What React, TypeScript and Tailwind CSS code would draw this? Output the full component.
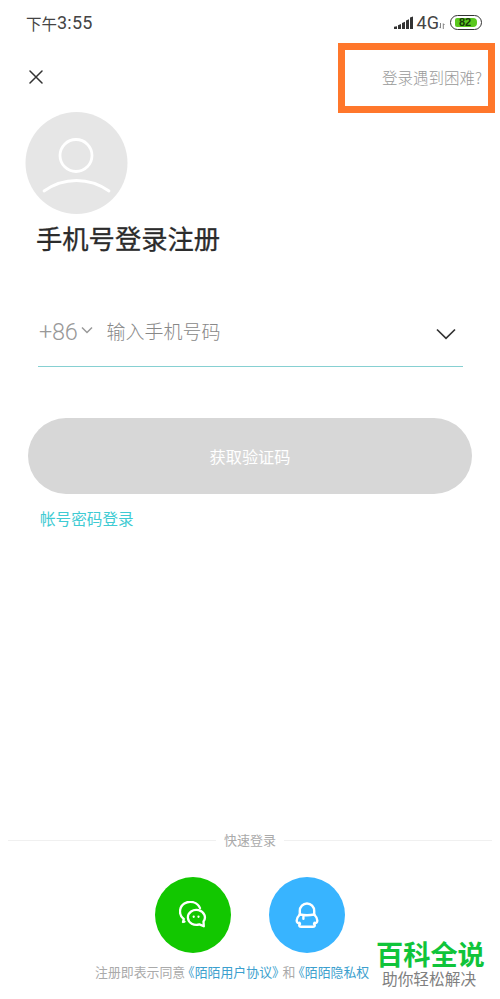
import React from 'react';

// 状态栏
function StatusBar() {
  return (
    <div className="flex h-[43px] items-center justify-between pt-[2px] pl-[26px] pr-[18px] text-[#444]">
      <div className="flex items-center whitespace-nowrap leading-5">
        <span className="text-[15.5px]">下午</span>
        <span className="font-[Roboto] text-[18px] tracking-[0.2px]">3:55</span>
      </div>
      <div className="flex items-center">
        <svg width="20" height="14" viewBox="0 0 20 14" fill="#333">
          <path d="M0 10.8 3 10.2V13H0zM4 9.2 7 8V13H4zM8 7 11 5.8V13H8zM12 4.5 15 3.2V13H12zM16 1.5 19 .5V13H16z" />
        </svg>
        <span className="ml-[3px] font-[Roboto] text-[18px] leading-5">4G</span>
        <svg className="mt-1.5" width="6" height="6" viewBox="0 0 6 6" fill="none" stroke="#777" strokeWidth="0.9">
          <path d="M1.5 0v5M.3 3.8 1.5 5.2M4.3 6V.8M5.5 2 4.3.6" />
        </svg>
        <div className="ml-[5px] flex h-[15px] w-[32px] items-center justify-center rounded-full border-[1.5px] border-[#333] p-px">
          <div className="flex h-[9px] w-[22px] items-center rounded-r-[4px] rounded-l-[2px] bg-[#5ac81e] pl-[4px] font-['Liberation_Sans'] text-[11px] leading-none font-bold text-[#173a08]">
            82
          </div>
        </div>
      </div>
    </div>
  );
}

function Avatar() {
  return (
    <svg className="-mt-px ml-[25px] block" width="103" height="102" viewBox="0 0 103 102" fill="none">
      <circle cx="51.5" cy="51" r="51" fill="#e6e6e6" />
      <circle cx="51" cy="43.5" r="16" stroke="#fff" strokeWidth="2.8" />
      <path d="M19 79C39 65 64 65 84 79" stroke="#fff" strokeWidth="2.8" strokeLinecap="round" />
    </svg>
  );
}

function WechatIcon() {
  return (
    <svg width="28" height="28" viewBox="0 0 28 28" fill="none" stroke="#fff" strokeWidth="2.3" strokeLinecap="round" strokeLinejoin="round">
      <path d="M21 7.200A10.300 9.700 0 1 0 4.800 18L4 21 5.500 20.600" />
      <path d="M24.800 25.300 24.500 20.500A8.500 7.500 0 1 0 20.400 23.400Z" />
      <path d="M14.700 15.700v.1M19.500 15.700v.1" />
    </svg>
  );
}

function QQIcon() {
  return (
    <svg width="28" height="30" viewBox="0 0 28 30" fill="none" stroke="#fff" strokeWidth="2.4" strokeLinecap="round" strokeLinejoin="round">
      <path d="M6.800 14.500V11A7.200 7.500 0 0 1 21.200 11V14.500" />
      <path d="M6.800 14.500Q14 16 21.200 14.500M10.400 15.500V18.800" />
      <path d="M6.800 14.500C4.800 16.500 3.700 19 3.700 20.500 3.700 22.500 4.800 23.600 6.500 22.800L7 24C5.800 24.800 5.800 26.700 8 26.700H20C22.200 26.700 22.200 24.800 21 24L21.500 22.800C23.200 23.600 24.300 22.500 24.300 20.500 24.300 19 23.200 16.500 21.200 14.500" />
    </svg>
  );
}

export default function App() {
  return (
    <main className="relative h-[999px] w-[500px] overflow-hidden bg-white font-['Noto_Sans_CJK_SC',sans-serif]">
      <StatusBar />

      {/* 头部 */}
      <header className="flex h-[70px] justify-between pr-[5px] pl-[29px]">
        <button aria-label="关闭" className="mt-[27px] h-[14px]">
          <svg width="14" height="14" viewBox="0 0 14 14" stroke="#333" strokeWidth="1.5" strokeLinecap="round">
            <path d="M1 1 13 13M13 1 1 13" />
          </svg>
        </button>
        <div className="flex h-[70px] w-[157px] items-center justify-end border-[7.5px] border-[#ff772b] pr-[6px] pb-px text-[15.5px] font-light whitespace-nowrap text-[#999]">
          登录遇到困难?
        </div>
      </header>

      <Avatar />
      <h1 className="mt-1 ml-[36px] text-[26.3px] leading-10 font-normal text-[#2b2b2b] [-webkit-text-stroke:0.3px_#2b2b2b]">
        手机号登录注册
      </h1>

      {/* 手机号输入 */}
      <div className="mt-[39px] ml-[38px] flex h-[70px] w-[425px] items-center border-b border-[#86d0d2] text-[#999]">
        <span className="mt-[3px] ml-px font-[Roboto] text-[23.5px] font-light tracking-[-0.3px]">+86</span>
        <svg className="-mt-1 ml-[4px]" width="12" height="8" viewBox="0 0 12 8" fill="none" stroke="#999" strokeWidth="1.5">
          <path d="M1 1.500 6 6.500 11 1.500" />
        </svg>
        <span className="ml-[13px] text-[19px] font-light text-[#888]">输入手机号码</span>
        <svg className="mt-1 mr-[7px] ml-auto" width="20" height="12" viewBox="0 0 20 12" fill="none" stroke="#333" strokeWidth="1.7">
          <path d="M1 1.500 10 10.300 19 1.500" />
        </svg>
      </div>

      <button className="mt-[51px] ml-[28px] block h-[76px] w-[444px] rounded-full bg-[#d7d7d7] text-[16.2px] text-white">
        获取验证码
      </button>
      <a className="mt-[12px] ml-[40px] block text-[15.6px] leading-6 text-[#3fcbd3]">帐号密码登录</a>

      {/* 快速登录 */}
      <div className="mt-[300px] flex items-center gap-2 px-2 text-[13px] leading-5 text-[#aaa]">
        <div className="h-px flex-1 bg-[#f0f0f0]" />
        快速登录
        <div className="h-px flex-1 bg-[#f0f0f0]" />
      </div>
      <div className="mt-[27px] flex justify-center gap-[38px]">
        <button aria-label="微信" className="flex size-[76px] items-center justify-center rounded-full bg-[#12c700]">
          <WechatIcon />
        </button>
        <button aria-label="QQ" className="flex size-[76px] items-center justify-center rounded-full bg-[#38b4ff]">
          <QQIcon />
        </button>
      </div>

      <p className="mt-[9px] ml-[95px] flex text-[12.9px] leading-5 whitespace-nowrap text-[#aaa]">
        <span>注册即表示同意</span>
        <span className="ml-[3px] text-[#3c9fce] [font-feature-settings:'halt']">《陌陌用户协议》</span>
        <span className="ml-[4px]">和</span>
        <span className="ml-[3px] text-[#3c9fce] [font-feature-settings:'halt']">《陌陌隐私权</span>
      </p>

      {/* 水印 */}
      <div className="absolute top-[933px] left-[376px] whitespace-nowrap">
        <div className="text-[27.2px] leading-10 font-bold text-[#10c43a]">百科全说</div>
        <div className="-mt-[4px] ml-[6px] text-[15.7px] leading-5 text-[#808080]">助你轻松解决</div>
      </div>
    </main>
  );
}
